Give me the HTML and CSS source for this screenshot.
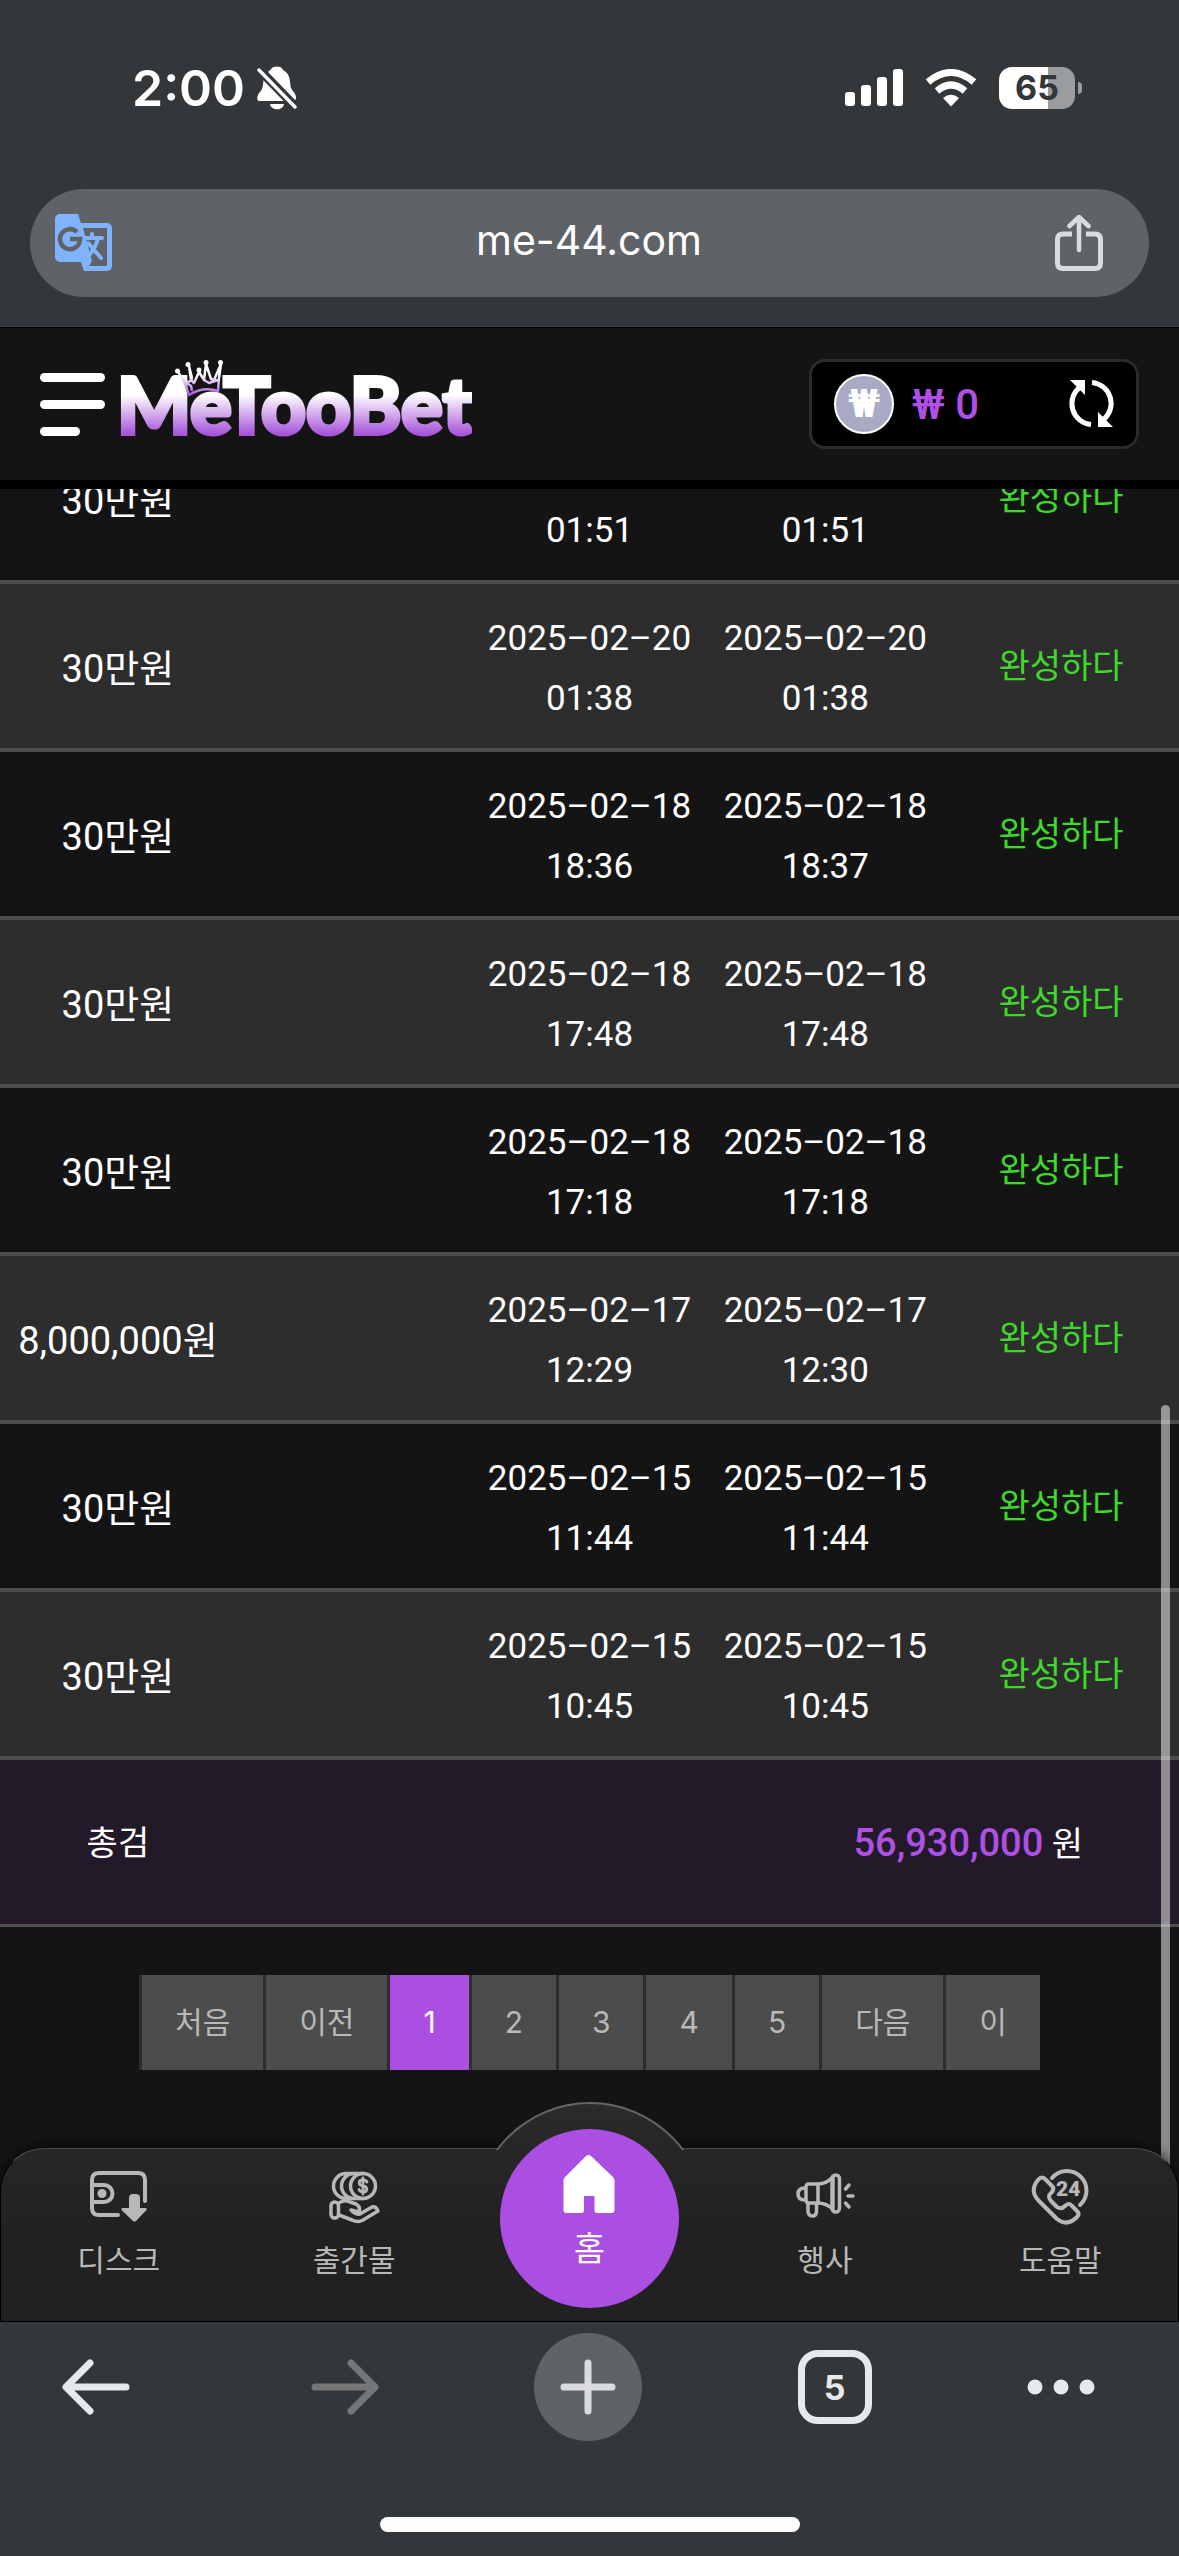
FILE: index.html
```html
<!DOCTYPE html>
<html lang="ko">
<head>
  <meta charset="utf-8">
  <meta name="viewport" content="width=device-width, initial-scale=1">
  <title>MeTooBet</title>
  <link rel="stylesheet" href="styles.css">
</head>
<body>

  <div class="browser-top">
    <div class="status-bar">
      <div class="status-left">
        <span class="time">2:00</span>
        <svg class="icon" width="40" height="44" viewBox="0 0 40 44" fill="#fff">
          <path d="M11 6C12 5 13 4 14 3.500C15-.5 25-.5 26 4C32 7 33 12 33.500 20C34 25 40 27 39 33L38 34z"/>
          <path d="M6.500 14L29 35H3C-1 35 0 30 2 27C6 23 6 20 6.500 14z"/>
          <path d="M13 38h14c-1 7-13 7-14 0z"/>
          <path d="M2 4L38 41" stroke="#34373a" stroke-width="8"/>
          <path d="M2 4L38 41" stroke="#fff" stroke-width="3.400" stroke-linecap="round"/>
        </svg>
      </div>
      <div class="status-right">
        <svg class="icon" width="58" height="38" viewBox="0 0 58 38" fill="#fff">
          <rect x="0" y="23" width="10" height="14" rx="3"/>
          <rect x="16" y="16" width="10" height="21" rx="3"/>
          <rect x="32" y="8" width="10" height="29" rx="3"/>
          <rect x="48" y="0" width="10" height="37" rx="3"/>
        </svg>
        <svg class="icon" width="52" height="38" viewBox="0 0 52 38">
          <path d="M3 13Q26-6 49 13M12 22Q26 10 40 22" fill="none" stroke="#fff" stroke-width="7"/>
          <path d="M18 29q8-6.500 16 0l-8 8.500z" fill="#fff"/>
        </svg>
        <div class="battery"><span>65</span></div>
      </div>
    </div>
    <div class="url-bar">
      <button class="url-button" aria-label="Translate">
        <svg class="icon" width="58" height="58" viewBox="0 0 58 58">
          <path d="M5 0H23L26 9H52a5 5 0 0 1 5 5V52a5 5 0 0 1-5 5H29L26 48H5a5 5 0 0 1-5-5V5a5 5 0 0 1 5-5z" fill="#7fb3fc"/>
          <path d="M28 14H52V52H34L37 47L34 36L28 14z" fill="#5f6367"/>
          <path d="M22 18A10 10 0 1 0 25 25H15" fill="none" stroke="#5f6367" stroke-width="4.500"/>
          <path d="M30 24H47M37 20V24M43 24C41 33 37 39 30 45M33 29L46 44" fill="none" stroke="#7fb3fc" stroke-width="4" stroke-linecap="round"/>
        </svg>
      </button>
      <span class="url">me-44.com</span>
      <button class="url-button" aria-label="Share">
        <svg class="icon" width="48" height="58" viewBox="0 0 48 58" fill="none" stroke="#d9dbe1" stroke-width="5">
          <path d="M17 20H8q-5.500 0-5.500 5.500V49q0 5.500 5.500 5.500H40q5.500 0 5.500-5.500V25.500q0-5.500-5.500-5.500H31"/>
          <path d="M24 36V4M14.500 12L24 3L33.500 12" stroke-width="4.500" stroke-linecap="round" stroke-linejoin="round"/>
        </svg>
      </button>
    </div>
  </div>

  <header class="site-header">
    <button class="menu-button" aria-label="Menu"><i></i><i></i><i></i></button>
    <a class="logo" href="#">
      <span>MeTooBet</span>
      <svg class="crown" width="50" height="40" viewBox="0 0 50 40">
        <defs>
          <linearGradient id="crown-fill" x1="0" y1="0" x2="0" y2="1">
            <stop offset=".35" stop-color="#fff"/>
            <stop offset="1" stop-color="#a855db"/>
          </linearGradient>
        </defs>
        <path fill="none" stroke="url(#crown-fill)" stroke-width="2.500" stroke-linejoin="round" d="M3 12L9 21L14 35Q28 26 43 31L44 18L46 4L39 20L36 19L31 4L29 20L24 12L19 23L16 20L14 6L17 18Q15 24 9 21L16 26L17 31M29 20L34 23L43 20"/>
        <g fill="#fff">
          <circle cx="2.500" cy="11" r="2.500"/><circle cx="13" cy="4.500" r="2.500"/><circle cx="24" cy="10" r="2.500"/><circle cx="31" cy="2.500" r="2.500"/><circle cx="45.500" cy="2.500" r="2.500"/>
        </g>
      </svg>
    </a>
    <div class="balance">
      <span class="coin">₩</span>
      <span class="amount">₩ 0</span>
      <button class="refresh" aria-label="Refresh">
        <svg class="icon" width="48" height="48" viewBox="0 0 48 48">
          <path d="M23 44.500A21 21 0 0 1 12 7M24 2.500A21 21 0 0 1 35 40" fill="none" stroke="#fff" stroke-width="5"/>
          <path d="M2 0H17V15zM45 47H30V32z" fill="#fff"/>
        </svg>
      </button>
    </div>
  </header>

  <main class="content">
    <table class="history">
      <tbody>
        <tr><td class="won">30만원</td><td></td><td>2025–02–20 01:51</td><td>2025–02–20 01:51</td><td class="done">완성하다</td></tr>
        <tr><td class="won">30만원</td><td></td><td>2025–02–20 01:38</td><td>2025–02–20 01:38</td><td class="done">완성하다</td></tr>
        <tr><td class="won">30만원</td><td></td><td>2025–02–18 18:36</td><td>2025–02–18 18:37</td><td class="done">완성하다</td></tr>
        <tr><td class="won">30만원</td><td></td><td>2025–02–18 17:48</td><td>2025–02–18 17:48</td><td class="done">완성하다</td></tr>
        <tr><td class="won">30만원</td><td></td><td>2025–02–18 17:18</td><td>2025–02–18 17:18</td><td class="done">완성하다</td></tr>
        <tr><td class="won">8,000,000원</td><td></td><td>2025–02–17 12:29</td><td>2025–02–17 12:30</td><td class="done">완성하다</td></tr>
        <tr><td class="won">30만원</td><td></td><td>2025–02–15 11:44</td><td>2025–02–15 11:44</td><td class="done">완성하다</td></tr>
        <tr><td class="won">30만원</td><td></td><td>2025–02–15 10:45</td><td>2025–02–15 10:45</td><td class="done">완성하다</td></tr>
      </tbody>
      <tfoot>
        <tr><td>총검</td><td class="total" colspan="4"><b>56,930,000</b> 원</td></tr>
      </tfoot>
    </table>

    <nav class="pagination">
      <a href="#">처음</a>
      <a href="#">이전</a>
      <a href="#" class="active">1</a>
      <a href="#">2</a>
      <a href="#">3</a>
      <a href="#">4</a>
      <a href="#">5</a>
      <a href="#">다음</a>
      <a href="#">이</a>
    </nav>

    <div class="scroll-thumb"></div>

    <nav class="tab-bar">
      <div class="bump"></div>
      <a href="#">
        <svg class="icon" width="60" height="60" viewBox="0 0 60 60" fill="none" stroke="#b8b8b8" stroke-width="4" stroke-linecap="round">
          <path d="M29 48H10q-7 0-7-7V13q0-7 7-7H49q7 0 7 7V34"/>
          <path d="M4 18H15a8.500 8.500 0 0 1 0 17H4"/>
          <circle cx="13" cy="26.500" r="4.500" fill="#b8b8b8" stroke="none"/>
          <path d="M40 31q0-4 4-4h3q4 0 4 4V41h5q3 0 1 2.500L47 54q-1.500 1.500-3 0L33 43.500q-2-2.500 1-2.500h6z" fill="#b8b8b8" stroke="none"/>
        </svg>
        <span>디스크</span>
      </a>
      <a href="#">
        <svg class="icon" width="60" height="60" viewBox="0 0 60 60" fill="none" stroke="#b8b8b8" stroke-width="3.500" stroke-linecap="round" stroke-linejoin="round">
          <circle cx="39" cy="19" r="12.500"/>
          <path d="M30 6.500a12.500 12.500 0 0 0 0 25M22 6.500a12.500 12.500 0 0 0 0 25M22 6.500H39M22 31.500H39"/>
          <path d="M43 15q-1-2-4-2c-5 0-5 5.500 0 6s5 6 0 6q-3 0-4-2.500M39 11V27" stroke-width="2.800"/>
          <rect x="7" y="35" width="7.500" height="16" rx="3.700"/>
          <path d="M15 36Q20 32 26 35L32 37Q37 40 35 45L27 43Q31 48 36 47L48 40Q52 39 54 44L39 53Q34 56 28 53L15 48"/>
        </svg>
        <span>출간물</span>
      </a>
      <a href="#" class="home">
        <svg class="icon" width="52" height="58" viewBox="0 0 52 58" fill="#fff">
          <path d="M23 1q2.500-2 5 0L50 22q1.500 1.500 1.500 3.500V55q0 3-3 3H34q-2.500 0-2.500-3V41H21V55q0 3-2.500 3H3.500q-3 0-3-3V25.500Q.5 23.500 2 22z"/>
        </svg>
        <span>홈</span>
      </a>
      <a href="#">
        <svg class="icon" width="60" height="60" viewBox="0 0 60 60" fill="none" stroke="#b8b8b8" stroke-width="3.500" stroke-linecap="round" stroke-linejoin="round">
          <path d="M11 20q0-3 3-3H23Q31 17 38 10V42Q31 36 23 36H14q-3 0-3-3z"/>
          <path d="M10 21Q3 21 3 27T10 33M23 17V36M13 37V45q1 4 4.500 4t4-4V37"/>
          <rect x="37" y="8" width="7.500" height="37" rx="3.700"/>
          <path d="M50.500 22L54 18M53 29H58M50.500 36L54 40"/>
        </svg>
        <span>행사</span>
      </a>
      <a href="#">
        <svg class="icon" width="60" height="60" viewBox="0 0 60 60" fill="none" stroke="#b8b8b8" stroke-width="4" stroke-linecap="round" stroke-linejoin="round">
          <path d="M8 13Q12 8 16 13L22 19Q25 22 21 26Q17 29 21 34L27 40Q31 43 35 39Q39 35 42 39L47 44Q50 47 47 50Q37 60 27 52L9 34Q-1 24 8 13z"/>
          <path d="M22 11A19.500 19.500 0 1 1 50 38"/>
          <text x="26" y="29" class="badge-24">24</text>
        </svg>
        <span>도움말</span>
      </a>
    </nav>
  </main>

  <div class="browser-bottom">
    <div class="toolbar">
      <div class="toolbar-history">
        <button aria-label="Back">
          <svg class="icon" width="68" height="56" viewBox="0 0 68 56" fill="none" stroke="#e5e9ec" stroke-width="7" stroke-linecap="round" stroke-linejoin="round">
            <path d="M64 28H5M28 4L4 28L28 52"/>
          </svg>
        </button>
        <button aria-label="Forward">
          <svg class="icon" width="68" height="56" viewBox="0 0 68 56" fill="none" stroke="#757677" stroke-width="7" stroke-linecap="round" stroke-linejoin="round">
            <path d="M4 28H63M40 4L64 28L40 52"/>
          </svg>
        </button>
      </div>
      <button class="new-tab" aria-label="New tab">
        <svg class="icon" width="56" height="56" viewBox="0 0 56 56" stroke="#dadce0" stroke-width="7" stroke-linecap="round">
          <path d="M4 28H52M28 4V52"/>
        </svg>
      </button>
      <button class="tab-count">5</button>
      <button aria-label="More">
        <svg class="icon" width="68" height="16" viewBox="0 0 68 16" fill="#e5e9ec">
          <circle cx="8" cy="8" r="7.500"/><circle cx="34" cy="8" r="7.500"/><circle cx="60" cy="8" r="7.500"/>
        </svg>
      </button>
    </div>
    <div class="home-indicator"></div>
  </div>

</body>
</html>
```

FILE: styles.css
```css
* {
  box-sizing: border-box;
}

body {
  display: flex;
  flex-direction: column;
  height: 100vh;
  margin: 0;
  background: #141414;
  color: #fff;
  font-family: Roboto, "Noto Sans CJK KR", sans-serif;
  font-size: 35px;
  overflow: hidden;
}

a {
  color: inherit;
  text-decoration: none;
}

button {
  padding: 0;
  border: 0;
  background: none;
  color: inherit;
  font: inherit;
}

.icon {
  display: block;
}

/* browser chrome, top */

.browser-top {
  padding: 54px 30px 30px;
  border-bottom: 1px solid #000;
  background: #34373a;
  font-family: Inter, sans-serif;
}

.status-bar {
  display: flex;
  align-items: center;
  justify-content: space-between;
  height: 68px;
  padding: 0 74px 0 102px;
}

.status-left {
  display: flex;
  align-items: center;
  gap: 12px;
}

.status-right {
  display: flex;
  align-items: center;
  gap: 22px;
}

.time {
  font-size: 50px;
  font-weight: 600;
  line-height: 68px;
}

.battery {
  position: relative;
  width: 76px;
  height: 42px;
  border-radius: 13px;
  background: linear-gradient(to right, #fff 65%, #9b9c9e 65%);
  color: #34373a;
  font-size: 34px;
  font-weight: 700;
  line-height: 42px;
  text-align: center;
}

.battery::after {
  content: "";
  position: absolute;
  top: 15px;
  right: -7px;
  width: 4px;
  height: 12px;
  border-radius: 0 4px 4px 0;
  background: #9b9c9e;
}

.url-bar {
  display: flex;
  align-items: center;
  justify-content: space-between;
  height: 108px;
  margin-top: 67px;
  padding: 0 46px 0 25px;
  border-radius: 54px;
  background: #5f6367;
}

.url {
  padding: 0 0 6px 10px;
  font-size: 41px;
}

/* site header */

.site-header {
  display: flex;
  align-items: center;
  height: 161px;
  padding: 0 40px;
  border-bottom: 9px solid #000;
}

.menu-button {
  display: flex;
  flex-direction: column;
  gap: 18px;
}

.menu-button i {
  width: 65px;
  height: 9px;
  border-radius: 5px;
  background: #fff;
}

.menu-button i:last-child {
  width: 40px;
}

.logo {
  position: relative;
  margin-left: 12px;
  font-family: Lato, sans-serif;
  font-size: 78px;
  font-weight: 900;
  line-height: 84px;
}

.logo span {
  background: linear-gradient(#fff 40%, #a855db 82%);
  -webkit-background-clip: text;
  background-clip: text;
  color: transparent;
  -webkit-text-stroke: 4px transparent;
}

.crown {
  position: absolute;
  top: -2px;
  left: 58px;
}

.balance {
  display: flex;
  align-items: center;
  width: 330px;
  height: 90px;
  margin-left: auto;
  padding: 0 20px 0 22px;
  border: 3px solid #2b2b2b;
  border-radius: 16px;
  background: #000;
}

.coin {
  width: 60px;
  height: 60px;
  border: 2px solid #fff;
  border-radius: 50%;
  background: #a8aac6;
  font-size: 38px;
  font-weight: 900;
  line-height: 56px;
  text-align: center;
}

.amount {
  margin-left: 18px;
  color: #b04fe6;
  font-size: 42px;
  font-weight: 500;
}

.refresh {
  margin-left: auto;
}

/* history table, kept scrolled to the end */

.content {
  position: relative;
  flex: 1;
  display: flex;
  flex-direction: column;
  justify-content: flex-end;
  min-height: 0;
  padding-bottom: 251px;
  overflow: hidden;
}

.history {
  flex: none;
  width: 100%;
  border-spacing: 0;
  table-layout: fixed;
  text-align: center;
}

.history td {
  height: 168px;
  padding: 6px 10px 0;
  border-bottom: 4px solid #4d4d4d;
  line-height: 60px;
}

.history tr:nth-child(even) {
  background: #2d2d2d;
}

.history .won {
  padding: 6px 0 0;
  font-size: 38px;
}

.history .done {
  padding-top: 0;
  color: #40d82c;
  font-size: 34px;
}

.history tfoot td {
  height: 167px;
  padding-top: 2px;
  border-bottom-width: 3px;
  background: #231a29;
  font-size: 34px;
}

.history .total {
  padding-right: 96px;
  text-align: right;
}

.total b {
  color: #af50e5;
  font-size: 38px;
  font-weight: 500;
}

.pagination {
  display: flex;
  flex: none;
  justify-content: center;
  margin-top: 48px;
}

.pagination a {
  padding: 0 33px;
  border-left: 3px solid #2d2d2d;
  background: #4c4c4c;
  color: #b8b8b8;
  font-family: Inter, "Noto Sans CJK KR", sans-serif;
  font-size: 30px;
  line-height: 95px;
}

.pagination .active {
  background: #ab4ee2;
  color: #fff;
}

.scroll-thumb {
  position: absolute;
  top: 50%;
  right: 9px;
  bottom: 120px;
  width: 9px;
  border-radius: 5px;
  background: rgba(255, 255, 255, .5);
}

/* site tab bar */

.tab-bar {
  position: absolute;
  right: 0;
  bottom: 0;
  left: 0;
  display: grid;
  grid-template-columns: repeat(5, 1fr);
  height: 173px;
  border: 1px solid #4a4a4a;
  border-width: 1px 1px 0;
  border-radius: 44px 44px 0 0;
  border-color: #4a4a4a #000;
  background: linear-gradient(#272727, #212121 50%);
  box-shadow: 0 -2px 12px rgba(0, 0, 0, .6);
  color: #b8b8b8;
  font-size: 30px;
}

.tab-bar a {
  display: flex;
  flex-direction: column;
  align-items: center;
  gap: 14px;
  padding-top: 18px;
  line-height: 40px;
}

.bump {
  position: absolute;
  top: -47px;
  left: 50%;
  width: 236px;
  height: 48px;
  margin-left: -118px;
  overflow: hidden;
}

.bump::before {
  content: "";
  display: block;
  height: 236px;
  border: 2px solid #666;
  border-radius: 50%;
  background: linear-gradient(#2b2b2b, #262626 20%);
}

.tab-bar .home {
  position: relative;
  gap: 16px;
  justify-self: center;
  width: 179px;
  height: 179px;
  margin-top: -20px;
  padding-top: 26px;
  border-radius: 50%;
  background: #ab4ee2;
  color: #fff;
  font-size: 34px;
}

.badge-24 {
  fill: #b8b8b8;
  stroke: none;
  font-family: Roboto, sans-serif;
  font-size: 21px;
  font-weight: 900;
}

/* browser chrome, bottom */

.browser-bottom {
  height: 235px;
  padding: 11px 0 24px;
  border-top: 1px solid #000;
  background: #34373a;
  font-family: Inter, sans-serif;
}

.toolbar {
  display: flex;
  align-items: center;
  justify-content: space-between;
  padding: 0 84px 0 62px;
}

.toolbar-history {
  display: flex;
  gap: 181px;
}

.new-tab {
  display: grid;
  place-items: center;
  width: 108px;
  height: 108px;
  border-radius: 50%;
  background: #5f6367;
}

.tab-count {
  width: 74px;
  height: 74px;
  border: 7px solid #e5e9ec;
  border-radius: 20px;
  color: #e5e9ec;
  font-size: 34px;
  font-weight: 700;
}

.home-indicator {
  width: 420px;
  height: 15px;
  margin: 76px auto 0;
  border-radius: 8px;
  background: #fdfdfd;
}
```
